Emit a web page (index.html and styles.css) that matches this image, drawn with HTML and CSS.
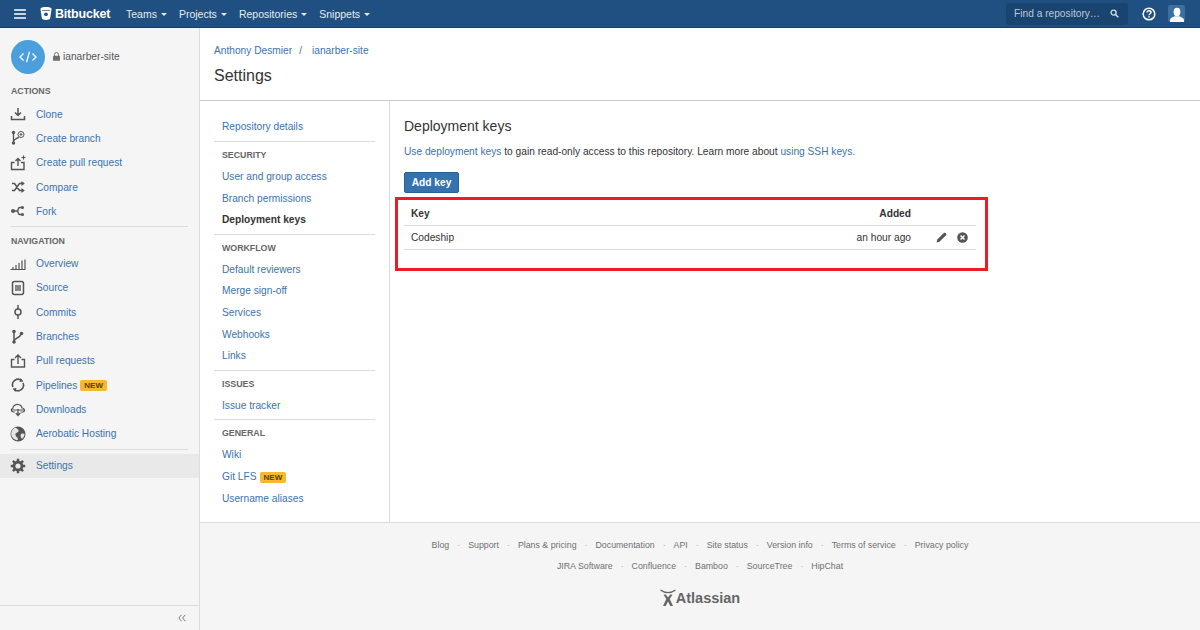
FILE: index.html
```html
<!DOCTYPE html>
<html lang="en">
<head>
    <meta charset="UTF-8">
    <title>Settings</title>
    <link rel="stylesheet" href="styles.css">
</head>
<body>
    <header class="topbar">
        <svg class="burger" width="12" height="10" viewBox="0 0 12 10"><path d="M.5 1h11M.5 5h11M.5 9h11" stroke="#fff" stroke-width="1.500" stroke-linecap="round"/></svg>
        <div class="brand">
            <svg width="12" height="13" viewBox="0 0 12 14"><path d="M0 2.200C0 .7 3 0 6 0s6 .7 6 2.200l-1.500 10C10.300 13.400 8 14 6 14s-4.300-.6-4.500-1.800z" fill="#fff"/><circle cx="6" cy="7.800" r="2" fill="#205081"/><path d="M1.800 3.700h8.400" stroke="#205081" stroke-width=".8"/></svg>
            <span>Bitbucket</span>
        </div>
        <nav class="topnav">
            <a>Teams</a>
            <a>Projects</a>
            <a>Repositories</a>
            <a>Snippets</a>
        </nav>
        <div class="topright">
            <div class="search">
                <span>Find a repository…</span>
                <svg width="9" height="9" viewBox="0 0 9 9"><circle cx="3.600" cy="3.600" r="2.500" fill="none" stroke="#ccd9e6" stroke-width="1.400"/><path d="M5.500 5.500L8.300 8.300" stroke="#ccd9e6" stroke-width="1.600"/></svg>
            </div>
            <svg class="help" width="14" height="14" viewBox="0 0 14 14"><circle cx="7" cy="7" r="5.800" fill="none" stroke="#fff" stroke-width="1.500"/><path d="M5 5.500C5 4.300 6 3.800 7 3.800s2 .6 2 1.600c0 1.300-2 1.400-2 2.900" fill="none" stroke="#fff" stroke-width="1.400"/><rect x="6.300" y="9.200" width="1.400" height="1.400" fill="#fff"/></svg>
            <div class="avatar">
                <svg width="14" height="15" viewBox="0 0 14 15"><ellipse cx="7" cy="5" rx="3.400" ry="4.200" fill="#fff"/><path d="M0 15v-2c0-2 3-3 4.800-3.800h4.400C11 10 14 11 14 13v2z" fill="#fff"/></svg>
            </div>
        </div>
    </header>

    <div class="page">
        <aside class="sidebar">
            <div class="repo">
                <div class="repo-icon">
                    <svg width="18" height="12" viewBox="0 0 18 12"><path d="M4.500 2.500L1 6l3.500 3.500M13.500 2.500L17 6l-3.500 3.500M10.500 .8L7.500 11.200" fill="none" stroke="#fff" stroke-width="1.300"/></svg>
                </div>
                <svg class="lock" width="7" height="9" viewBox="0 0 7 9"><path d="M1.500 4V2.500a2 2 0 0 1 4 0V4" fill="none" stroke="#707070" stroke-width="1"/><rect y="3.800" width="7" height="5" rx=".6" fill="#707070"/></svg>
                <span class="repo-name">ianarber-site</span>
            </div>

            <h4 class="side-head actions-head">ACTIONS</h4>
            <ul class="side-list">
                <li><svg width="16" height="16" viewBox="0 0 16 16"><path d="M8 2v7M5 6.500L8 9.500l3-3M1.500 10v3.500h13V10" fill="none" stroke="#555" stroke-width="1.500"/></svg><a>Clone</a></li>
                <li><svg width="16" height="16" viewBox="0 0 16 16"><g fill="none" stroke="#555" stroke-width="1.300"><path d="M3.500 3v9M3.500 11.500C4 8.500 8 9 8.500 7"/><circle cx="11" cy="4.500" r="3" stroke-width="1"/><path d="M11 3v3M9.500 4.500h3" stroke-width=".9"/></g><circle cx="3.500" cy="2.500" r="1.700" fill="#555"/><circle cx="3.500" cy="13" r="1.700" fill="#555"/></svg><a>Create branch</a></li>
                <li><svg width="16" height="16" viewBox="0 0 16 16"><path d="M4.500 7.500h-3v7h12.500v-7h-3M8 11V3.500M5.500 6L8 3.500 10.500 6" fill="none" stroke="#555" stroke-width="1.400"/><path d="M13.500 .5v4M11.500 2.500h4" stroke="#555" stroke-width="1.200"/></svg><a>Create pull request</a></li>
                <li><svg width="16" height="16" viewBox="0 0 16 16"><path d="M2 4.500h2.500l5 7H12M2 11.500h2.500l5-7H12" fill="none" stroke="#555" stroke-width="1.500"/><path d="M11.500 2l3.300 2.500-3.300 2.500zM11.500 9l3.300 2.500-3.300 2.500z" fill="#555"/></svg><a>Compare</a></li>
                <li><svg width="16" height="16" viewBox="0 0 16 16"><path d="M2 8h5M12 4.500H9.500C8 4.500 8.500 8 7 8c1.500 0 1 3.500 2.500 3.500H12" fill="none" stroke="#555" stroke-width="1.500"/><circle cx="3" cy="8" r="2" fill="#555"/><circle cx="12.500" cy="4.500" r="1.500" fill="#555"/><circle cx="12.500" cy="11.500" r="1.500" fill="#555"/></svg><a>Fork</a></li>
            </ul>
            <hr class="side-rule">
            <h4 class="side-head">NAVIGATION</h4>
            <ul class="side-list">
                <li><svg width="16" height="16" viewBox="0 0 16 16"><path d="M.5 13.500h15M3 13v-2M6 13V9M9 13V7M12 13V4.500M15 13V3.500" fill="none" stroke="#555" stroke-width="1.200"/></svg><a>Overview</a></li>
                <li><svg width="16" height="16" viewBox="0 0 16 16"><rect x="2.500" y="1.500" width="11" height="13" rx="2" fill="none" stroke="#555" stroke-width="1.500"/><rect x="5" y="5" width="6" height="6" fill="#888"/></svg><a>Source</a></li>
                <li><svg width="16" height="16" viewBox="0 0 16 16"><circle cx="8" cy="8" r="3" fill="none" stroke="#555" stroke-width="1.500"/><path d="M8 1v4M8 11v4" stroke="#555" stroke-width="1.500"/></svg><a>Commits</a></li>
                <li><svg width="16" height="16" viewBox="0 0 16 16"><path d="M4 3v10M4 12c.5-3.500 6-2.500 7-7" fill="none" stroke="#555" stroke-width="1.500"/><circle cx="4" cy="2.500" r="1.800" fill="#555"/><circle cx="4" cy="13" r="1.800" fill="#555"/><circle cx="11.500" cy="4.500" r="1.800" fill="#555"/></svg><a>Branches</a></li>
                <li><svg width="16" height="16" viewBox="0 0 16 16"><path d="M4.500 6.500h-3v7.500h13V6.500h-3M8 11V2.500M5 5L8 2l3 3" fill="none" stroke="#555" stroke-width="1.400"/></svg><a>Pull requests</a></li>
                <li><svg width="16" height="16" viewBox="0 0 16 16"><path d="M3 10A5.500 5.500 0 0 1 11.500 3.500M13 6a5.500 5.500 0 0 1-8.500 6.500" fill="none" stroke="#555" stroke-width="1.600"/><path d="M10.500 1l3 3.500-4 .5zM5.500 15l-3-3.500 4-.5z" fill="#555"/></svg><a>Pipelines</a><span class="badge">NEW</span></li>
                <li><svg width="16" height="16" viewBox="0 0 16 16"><path d="M5 11H3.500C1 11 .5 7.800 2.800 7.300 3 5 5.500 3 8.500 3.500c2 .3 3.300 2 3.500 3.500 2.500 0 3.500 3.500 1 4h-2.500" fill="none" stroke="#555" stroke-width="1.200"/><path d="M1 9h14" stroke="#555" stroke-width="1"/><path d="M8 8v6M5.800 12L8 14.500 10.200 12" fill="none" stroke="#555" stroke-width="1.300"/></svg><a>Downloads</a></li>
                <li><svg width="16" height="16" viewBox="0 0 16 16"><circle cx="8" cy="8" r="7.500" fill="#555"/><path d="M5 1.500C8 3 9 4 8.500 5.500 7.500 7 5 6.500 5.500 9c.3 2 2 2 2.500 4 .2 1-1 1.500-2 1C2 12.500 .5 9 1.500 6 2 4 3.500 2.500 5 1.500zM11 8c1.500-.8 3-.5 3.500 0 0 2-1 3.500-2.500 5-1.200-1.500-2-3.500-1-5z" fill="#f5f5f5" opacity=".9"/></svg><a>Aerobatic Hosting</a></li>
            </ul>
            <hr class="side-rule rule-settings">
            <div class="side-active">
                <svg width="16" height="16" viewBox="0 0 16 16"><circle cx="8" cy="8" r="4" fill="none" stroke="#555" stroke-width="2.800"/><path d="M8 .8v3M8 12.200v3M.8 8h3M12.200 8h3M2.900 2.900L5 5M11 11l2.100 2.100M13.100 2.900L11 5M5 11l-2.100 2.100" stroke="#555" stroke-width="2.400"/></svg>
                <a>Settings</a>
            </div>
            <div class="collapse">
                <svg width="8" height="8" viewBox="0 0 8 8"><path d="M3.500 .8L.8 4l2.700 3.200M7.300 .8L4.600 4l2.700 3.200" fill="none" stroke="#777" stroke-width="1"/></svg>
            </div>
        </aside>

        <main class="main">
            <div class="page-head">
                <div class="crumbs"><a>Anthony Desmier</a><span class="slash">/</span><a>ianarber-site</a></div>
                <h1>Settings</h1>
            </div>
            <div class="panels">
                <nav class="settings-nav">
                    <a class="first">Repository details</a>
                    <hr>
                    <h5>SECURITY</h5>
                    <a>User and group access</a>
                    <a>Branch permissions</a>
                    <a class="current">Deployment keys</a>
                    <hr>
                    <h5>WORKFLOW</h5>
                    <a>Default reviewers</a>
                    <a>Merge sign-off</a>
                    <a>Services</a>
                    <a>Webhooks</a>
                    <a>Links</a>
                    <hr>
                    <h5>ISSUES</h5>
                    <a>Issue tracker</a>
                    <hr>
                    <h5>GENERAL</h5>
                    <a>Wiki</a>
                    <a>Git LFS<span class="badge">NEW</span></a>
                    <a>Username aliases</a>
                </nav>
                <section class="keys">
                    <h2>Deployment keys</h2>
                    <p><a>Use deployment keys</a> to gain read-only access to this repository. Learn more about <a>using SSH keys.</a></p>
                    <button class="add-key">Add key</button>
                    <div class="key-table">
                        <div class="key-row key-head">
                            <span class="key-name">Key</span>
                            <span class="key-added">Added</span>
                            <span class="key-tools"></span>
                        </div>
                        <div class="key-row">
                            <span class="key-name">Codeship</span>
                            <span class="key-added">an hour ago</span>
                            <span class="key-tools">
                                <svg width="11" height="11" viewBox="0 0 11 11"><path d="M.5 10.500l.8-3L7.800 1c.5-.5 1.200-.5 1.700 0l.5.500c.5.500.5 1.200 0 1.700L3.500 9.700z" fill="#555"/></svg>
                                <svg width="11" height="11" viewBox="0 0 11 11"><circle cx="5.500" cy="5.500" r="5.300" fill="#555"/><path d="M3.500 3.500l4 4M7.500 3.500l-4 4" stroke="#fff" stroke-width="1.500"/></svg>
                            </span>
                        </div>
                    </div>
                    <div class="highlight"></div>
                </section>
            </div>
            <footer class="footer">
                <div class="foot-row">
                    <a>Blog</a><a>Support</a><a>Plans &amp; pricing</a><a>Documentation</a><a>API</a><a>Site status</a><a>Version info</a><a>Terms of service</a><a>Privacy policy</a>
                </div>
                <div class="foot-row">
                    <a>JIRA Software</a><a>Confluence</a><a>Bamboo</a><a>SourceTree</a><a>HipChat</a>
                </div>
                <div class="atlassian">
                    <svg width="16" height="18" viewBox="0 0 16 18"><path d="M.5 1C3 3 5.500 3.600 8 3.600S13 3 15.500 1" fill="none" stroke="#666" stroke-width="1.300"/><path d="M3.500 5.500h2.300L8 8.500l2.200-3h2.300L9.700 10l3.300 7h-2.700L8 12.500 5.700 17H3l3.300-7z" fill="#666"/></svg>
                    <span>Atlassian</span>
                </div>
            </footer>
        </main>
    </div>
</body>
</html>
```

FILE: styles.css
```css
html, body {
    margin: 0;
    height: 630px;
    overflow: hidden;
}
body {
    font-family: "Liberation Sans", Arial, sans-serif;
    font-size: 10.2px;
    color: #333;
    background-color: #fff;
}
a {
    color: #3b73af;
}
hr {
    border: none;
    margin: 0;
}

/* top bar */
.topbar {
    height: 27px;
    background-color: #205081;
    border-bottom: 1px solid #1a3f66;
    display: flex;
    align-items: center;
    padding-left: 14px;
    color: #fff;
}
.burger {
    flex: none;
    margin-right: 14px;
}
.brand {
    display: flex;
    align-items: center;
    gap: 3px;
    font-size: 12.5px;
    letter-spacing: -0.2px;
    font-weight: bold;
    margin-right: 15px;
    width: 71px;
}
.brand svg {
    flex: none;
}
.topnav {
    display: flex;
    gap: 12px;
}
.topnav a {
    color: #e4ecf4;
    font-size: 10.5px;
}
.topnav a::after {
    content: "";
    display: inline-block;
    margin-left: 4px;
    vertical-align: 2px;
    border: 3px solid transparent;
    border-top-color: #e4ecf4;
    border-bottom: none;
}
.topright {
    margin-left: auto;
    display: flex;
    align-items: center;
}
.search {
    width: 105px;
    height: 22px;
    padding: 0 9px 0 8px;
    background-color: #1a4470;
    border-radius: 2px;
    display: flex;
    align-items: center;
    justify-content: space-between;
    color: #b9c9da;
    margin-right: 14px;
}
.help {
    margin-right: 12px;
}
.avatar {
    width: 17px;
    height: 17px;
    background-color: #3c6f9f;
    border-radius: 2px;
    display: flex;
    align-items: flex-end;
    justify-content: center;
    margin-right: 15px;
}

.page {
    display: flex;
    height: 602px;
}

/* left sidebar */
.sidebar {
    width: 199px;
    flex: none;
    background-color: #f5f5f5;
    border-right: 1px solid #ddd;
    position: relative;
}
.repo {
    display: flex;
    align-items: center;
    padding: 11px 0 0 11px;
    height: 35px;
}
.repo-icon {
    width: 34px;
    height: 34px;
    border-radius: 50%;
    background-color: #4a9fdc;
    display: flex;
    align-items: center;
    justify-content: center;
    margin-right: 8px;
}
.lock {
    margin-right: 3px;
}
.repo-name {
    color: #555;
}
.side-head {
    margin: 0 0 0 11px;
    height: 16px;
    line-height: 12px;
    font-size: 8.8px;
    color: #666;
}
.actions-head {
    margin-top: 11px;
    margin-bottom: 1px;
}
.side-list {
    list-style: none;
    margin: 0;
    padding: 0;
}
.side-list li {
    height: 24.3px;
    display: flex;
    align-items: center;
    padding-left: 10px;
}
.side-list svg,
.side-active svg {
    flex: none;
    margin-right: 10px;
}
.side-rule {
    height: 1px;
    background-color: #ddd;
    margin: 3px 11px 8px;
}
.rule-settings {
    margin-bottom: 4px;
}
.side-active {
    height: 24px;
    display: flex;
    align-items: center;
    padding-left: 10px;
    background-color: #e9e9e9;
}
.collapse {
    position: absolute;
    left: 0;
    right: 0;
    bottom: 0;
    height: 24px;
    border-top: 1px solid #ddd;
    display: flex;
    align-items: center;
    justify-content: flex-end;
    padding-right: 13px;
}
.badge {
    display: inline-block;
    background-color: #f5b82e;
    color: #594300;
    font-size: 8px;
    font-weight: bold;
    line-height: 11px;
    padding: 0 4px;
    border-radius: 2px;
    margin-left: 3px;
}

/* main column */
.main {
    flex: 1;
    display: flex;
    flex-direction: column;
    min-width: 0;
}
.page-head {
    height: 73px;
    box-sizing: border-box;
    border-bottom: 1px solid #ccc;
    padding: 17px 0 0 14px;
}
.crumbs {
    line-height: 12px;
}
.slash {
    color: #707070;
    margin: 0 10px 0 7px;
}
h1 {
    margin: 8px 0 0;
    font-size: 16px;
    font-weight: normal;
    line-height: 22px;
    color: #333;
}
.panels {
    display: flex;
    height: 421px;
    border-bottom: 1px solid #ddd;
}
.settings-nav {
    width: 190px;
    box-sizing: border-box;
    flex: none;
    border-right: 1px solid #ddd;
    padding: 15px 14px 0 14px;
}
.settings-nav a {
    display: block;
    height: 21.6px;
    line-height: 21.6px;
    padding-left: 8px;
}
.settings-nav a.first {
    height: 22px;
    line-height: 21px;
}
.settings-nav a.current {
    color: #333;
    font-weight: bold;
}
.settings-nav hr {
    height: 1px;
    background-color: #ddd;
    margin-top: 3px;
}
.settings-nav h5 {
    margin: 0;
    padding: 7px 0 0 8px;
    height: 17px;
    line-height: 12px;
    font-size: 8.8px;
    color: #666;
}
.keys {
    flex: 1;
    position: relative;
    padding: 17px 0 0 14px;
}
h2 {
    margin: 0;
    font-size: 14px;
    font-weight: normal;
    line-height: 16px;
}
.keys p {
    margin: 11px 0 0;
    line-height: 14px;
}
.add-key {
    display: block;
    margin-top: 13px;
    height: 21px;
    width: 55px;
    padding: 0;
    border: 1px solid #2a5f97;
    border-radius: 2px;
    background-color: #3572b0;
    color: #fff;
    font: bold 10.2px "Liberation Sans", Arial, sans-serif;
}
.key-table {
    margin-top: 9px;
    width: 572px;
}
.key-row {
    height: 23px;
    display: flex;
    align-items: center;
    border-bottom: 1px solid #ddd;
    padding-left: 7px;
}
.key-head {
    color: #333;
    font-weight: bold;
}
.key-name {
    flex: 1;
}
.key-added {
    width: 100px;
    text-align: right;
}
.key-tools {
    width: 65px;
    box-sizing: border-box;
    display: flex;
    justify-content: flex-end;
    gap: 10px;
    padding-right: 8px;
}
.highlight {
    position: absolute;
    left: 5px;
    top: 96px;
    width: 587px;
    height: 68px;
    border: 3px solid #ed1c24;
}

/* footer */
.footer {
    flex: 1;
    background-color: #f5f5f5;
    padding-top: 14px;
    text-align: center;
}
.foot-row {
    display: flex;
    justify-content: center;
    height: 21px;
    line-height: 16px;
    font-size: 8.8px;
}
.foot-row a {
    color: #707070;
}
.foot-row a + a::before {
    content: "·";
    color: #aaa;
    margin: 0 8px;
}
.atlassian {
    display: flex;
    justify-content: center;
    align-items: center;
    margin-top: 10px;
    font-size: 14.5px;
    font-weight: bold;
    color: #666;
}
```
